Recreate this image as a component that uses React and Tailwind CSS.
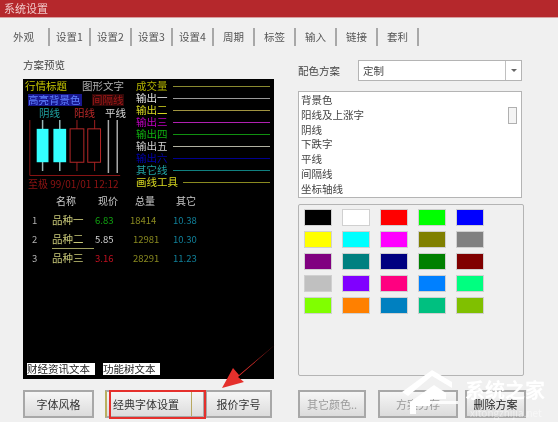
import React from "react";

const tabs = ["外观", "设置1", "设置2", "设置3", "设置4", "周期", "标签", "输入", "链接", "套利"];

const lines = [
    ["成交量", "text-[#b0b000]", "bg-[#8a8a30]"],
    ["输出一", "text-[#e0e0e0]", "bg-[#999999]"],
    ["输出二", "text-[#d8d820]", "bg-[#a09440]"],
    ["输出三", "text-[#c000c0]", "bg-[#b020b0]"],
    ["输出四", "text-[#10b010]", "bg-[#109010]"],
    ["输出五", "text-[#d0d0d0]", "bg-[#b0b0a0]"],
    ["输出六", "text-[#0000b0]", "bg-[#000090]"],
    ["其它线", "text-[#20a0a0]", "bg-[#108080]"],
    ["画线工具", "text-[#d8d820]", "bg-[#8a8a20]"],
];

const rows = [
    ["1", "品种一", "6.83", "18414", "10.38", "text-[#10a010]", ""],
    ["2", "品种二", "5.85", "12981", "10.30", "text-[#d0d0d0]", "pl-[3px]"],
    ["3", "品种三", "3.16", "28291", "11.23", "text-[#c01020]", "pl-[3px]"],
];

const schemeItems = ["背景色", "阳线及上涨字", "阴线", "下跌字", "平线", "间隔线", "坐标轴线"];

const swatches = [
    "bg-[#000000]", "bg-[#ffffff]", "bg-[#ff0000]", "bg-[#00ff00]", "bg-[#0000ff]",
    "bg-[#ffff00]", "bg-[#00ffff]", "bg-[#ff00ff]", "bg-[#808000]", "bg-[#808080]",
    "bg-[#800080]", "bg-[#008080]", "bg-[#000080]", "bg-[#008000]", "bg-[#800000]",
    "bg-[#c0c0c0]", "bg-[#8000ff]", "bg-[#ff0080]", "bg-[#0080ff]", "bg-[#00ff80]",
    "bg-[#80ff00]", "bg-[#ff8000]", "bg-[#0080c0]", "bg-[#00c080]", "bg-[#80c000]",
];

const Btn = ({children, className = "", muted}) => (
    <div className={`h-[28px] flex items-center justify-center border-2 border-[#a8a8a8] bg-gradient-to-b from-[#f6f6f6] to-[#dcdcdc] text-[11px] ${muted ? "text-[#9a9a9a]" : "text-[#333]"} ${className}`}>
        {children}
    </div>
);

const Candles = () => (
    <svg width="100" height="58" viewBox="25 120 100 58" className="block">
        <path d="M29 120V176.5H121" fill="none" stroke="#8a1414" strokeWidth="1" />
        <path d="M42 120V172M59.5 120V172" stroke="#9ab8b8" strokeWidth="1.5" />
        <rect x="36" y="129" width="12" height="34" fill="#33ffff" />
        <rect x="53" y="129" width="13" height="34" fill="#33ffff" />
        <path d="M77 120V172M95 120V172" stroke="#a02020" strokeWidth="1" />
        <rect x="70" y="129" width="14" height="34" fill="#000" stroke="#b82828" />
        <rect x="88" y="129" width="13" height="34" fill="#000" stroke="#b82828" />
        <path d="M109 120V174M118 120V174" stroke="#aaaaaa" strokeWidth="1.5" />
    </svg>
);

const Preview = () => (
    <div className="w-[251px] h-[300px] bg-black flex flex-col text-[10.5px] leading-[12px]">
        <div className="flex h-[112px]">
            <div className="w-[113px] pl-[2px] pt-[1px] flex flex-col">
                <div className="flex h-[13px] items-center">
                    <span className="text-[#c8c800] w-[57px]">行情标题</span>
                    <span className="text-[#b0b0b0]">图形文字</span>
                </div>
                <div className="flex h-[14px] items-center pl-[3px]">
                    <span className="bg-[#181890] text-[#6080ff] w-[54px] whitespace-nowrap">高亮背景色</span>
                    <span className="text-[#a01818] bg-[#300808] ml-[10px]">间隔线</span>
                </div>
                <div className="flex h-[14px] items-center pl-[14px]">
                    <span className="text-[#20a0a0] w-[35px]">阴线</span>
                    <span className="text-[#b82828] w-[31px]">阳线</span>
                    <span className="text-[#d8d8d8]">平线</span>
                </div>
                <Candles />
                <div className="flex h-[14px] items-center pl-[3px] text-[#901414] text-[10px] whitespace-nowrap">至极 99/01/01 12:12</div>
            </div>
            <div className="w-[134px] pt-[1px]">
                {lines.map(([label, text, line]) => (
                    <div key={label} className="flex items-center h-[12px]">
                        <span className={`${text} whitespace-nowrap mr-[5px]`}>{label}</span>
                        <div className={`flex-1 h-[1px] ${line}`}></div>
                    </div>
                ))}
            </div>
        </div>
        <div className="grid grid-cols-[23px_43px_35px_43px_40px] auto-rows-[19px] items-center text-[#c8c8c8] text-[10px] pl-[6px]">
            <span></span>
            <span className="pl-[4px]">名称</span>
            <span className="pl-[3px]">现价</span>
            <span className="pl-[5px]">总量</span>
            <span className="pl-[3px]">其它</span>
            {rows.map(([n, name, price, vol, other, color, volPad]) => (
                <React.Fragment key={n}>
                    <span className="pl-[3px] text-[#b0b0b0] text-[9.5px]">{n}</span>
                    <span className={`text-[#c8c878] text-[10.5px] ${n === "2" ? "border-b border-[#a0a060] leading-[18px] h-[19px] mt-[1px] w-[42px]" : ""}`}>{name}</span>
                    <span className={`${color} text-[9.5px]`}>{price}</span>
                    <span className={`text-[#8a8a20] text-[9.5px] ${volPad}`}>{vol}</span>
                    <span className="text-[#10809a] text-[9.5px]">{other}</span>
                </React.Fragment>
            ))}
        </div>
        <div className="flex-1"></div>
        <div className="flex gap-[8px] pl-[4px] pb-[4px] text-[#222] leading-[12px]">
            <span className="bg-white w-[68px] whitespace-nowrap">财经资讯文本</span>
            <span className="bg-white w-[57px] whitespace-nowrap">功能树文本</span>
        </div>
    </div>
);

const App = () => {
    return (
        <div className="relative w-[558px] h-[422px] overflow-hidden bg-[#f0f0f0] text-[#444] blur-[0.5px]" style={{fontFamily: '"Noto Sans CJK SC", "Liberation Sans", sans-serif'}}>
            <div className="h-[18px] bg-[#b5282c] border-b border-[#d8a0a0] text-[#f0c8c8] text-[11px] leading-[17px] pl-[4px]">系统设置</div>

            <div className="flex h-[28px] pl-[8px] pt-[10px] text-[10.5px] text-[#555]">
                {tabs.map((t, i) => (
                    <div key={t} className={`h-[18px] flex items-center justify-center border-r-2 border-[#a8a8a8] ${i === 0 ? "w-[42px] pr-[9px]" : "w-[41px]"}`}>{t}</div>
                ))}
            </div>

            <div className="flex pt-[13px] pl-[23px]">
                <div className="w-[251px]">
                    <div className="h-[20px] text-[10.5px] leading-[12px]">方案预览</div>
                    <Preview />
                    <div className="flex mt-[11px]">
                        <Btn className="w-[71px] mr-[11px]">字体风格</Btn>
                        <Btn className="relative w-[100px] pr-[18px] border-l-[#b8b060]">
                            经典字体设置
                            <span className="absolute left-[84px] top-0 bottom-0 w-[1px] bg-[#b8a860]"></span>
                            <span className="absolute left-[2px] top-[-2px] w-[97px] h-[29px] border-2 border-[#e5302c]"></span>
                        </Btn>
                        <Btn className="w-[67px]">报价字号</Btn>
                    </div>
                </div>

                <div className="w-[228px] ml-[24px] pt-[1px]">
                    <div className="flex items-center h-[21px] text-[10.5px]">
                        <span className="w-[60px]">配色方案</span>
                        <div className="w-[164px] h-[21px] flex bg-white border border-[#b4b4b4]">
                            <span className="flex-1 pl-[4px] leading-[19px]">定制</span>
                            <div className="w-[16px] border-l border-[#c0c0c0] flex items-center justify-center">
                                <span className="w-0 h-0 border-x-[3px] border-x-transparent border-t-[3px] border-t-[#666]"></span>
                            </div>
                        </div>
                    </div>
                    <div className="mt-[10px] w-[224px] h-[107px] bg-white border border-[#b4b4b4] flex text-[10.5px] leading-[14.8px] pt-[1px]">
                        <div className="flex-1 pl-[2px] whitespace-nowrap">
                            {schemeItems.map(s => <div key={s}>{s}</div>)}
                        </div>
                        <div className="w-[15px] pl-[2px] pt-[14px]">
                            <div className="w-[9px] h-[17px] bg-[#f4f4f4] border border-[#b0b0b0]"></div>
                        </div>
                    </div>
                    <div className="mt-[6px] w-[226px] h-[172px] border border-[#b4b4b4] rounded-[2px] pt-[4px] pl-[5px]">
                        <div className="grid grid-cols-[repeat(5,28px)] auto-rows-[17px] gap-x-[10px] gap-y-[5px]">
                            {swatches.map(c => (
                                <div key={c} className={`${c} border border-[#d0d0d0]`}></div>
                            ))}
                        </div>
                    </div>
                    <div className="flex mt-[14px]">
                        <Btn muted className="w-[68px] mr-[12px]">其它颜色..</Btn>
                        <Btn muted className="w-[80px] mr-[7px]">方案另存</Btn>
                        <Btn className="w-[61px] !text-[#222]">删除方案</Btn>
                    </div>
                </div>
            </div>

            {/* red arrow over the buttons */}
            <svg className="absolute left-0 top-0 pointer-events-none" width="558" height="422">
                <polygon points="276,344 239,375 233,368 222,388 244,382 238,377" fill="#e5302c" />
            </svg>

            {/* watermark */}
            <svg className="absolute left-[400px] top-[368px]" width="64" height="50" viewBox="0 0 64 50">
                <path d="M2 24L32 2L52 14V20L32 8L8 28Z" fill="#fff" />
                <path d="M10 34L34 17L46 25V31H30V38H16V46H10Z" fill="#fff" />
                <path d="M30 33H58V36H30Z" fill="#fff" opacity="0.85" />
            </svg>
            <div className="absolute left-[465px] top-[377px] text-[20px] leading-[26px] font-bold text-white whitespace-nowrap">系统之家</div>
            <div className="absolute left-[470px] top-[406px] text-[10px] leading-[13px] text-white/50 whitespace-nowrap">xitongzhijia.net</div>
        </div>
    );
};

export default App;
